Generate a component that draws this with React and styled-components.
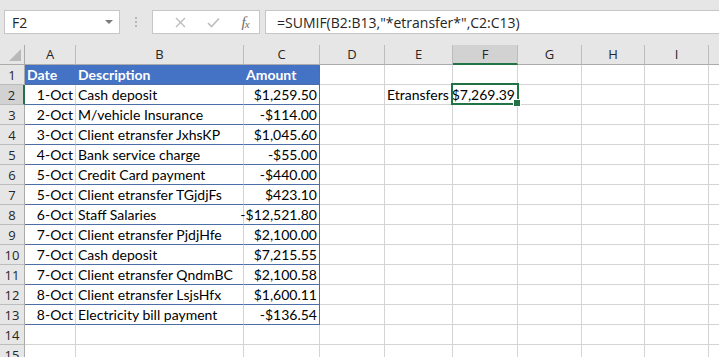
import React from "react";
import styled, { createGlobalStyle } from "styled-components";

const Global = createGlobalStyle`
  html, body { margin: 0; padding: 0; background: #ffffff; overflow: hidden; }
  body { width: 719px; height: 357px; }
  * { box-sizing: border-box; }
`;

const Page = styled.div`
  width: 719px;
  height: 357px;
  overflow: hidden;
  background: #ffffff;
  display: flex;
  flex-direction: column;
`;

const Toolbar = styled.div`
  height: 45px;
  flex: none;
  background: #e6e6e6;
  display: flex;
  align-items: flex-start;
  padding: 10px 0 0 4px;
  font-family: "Open Sans", "Noto Sans", sans-serif;
`;

const NameBox = styled.div`
  width: 116px;
  height: 24px;
  background: #ffffff;
  border: 1px solid #c6c6c6;
  display: flex;
  align-items: center;
  justify-content: space-between;
  padding: 0 6px 0 7px;
  font-size: 14px;
  color: #262626;
`;

const Caret = styled.span`
  width: 0;
  height: 0;
  border-left: 4px solid transparent;
  border-right: 4px solid transparent;
  border-top: 4px solid #7a7a7a;
`;

const Dots = styled.div`
  width: 32px;
  height: 24px;
  display: flex;
  flex-direction: column;
  align-items: center;
  justify-content: center;
  gap: 2px;
  & > span {
    width: 2px;
    height: 2px;
    background: #a6a6a6;
    border-radius: 1px;
  }
`;

const ActionBox = styled.div`
  width: 108px;
  height: 24px;
  background: #ffffff;
  border: 1px solid #c6c6c6;
  display: flex;
  align-items: center;
  padding-left: 12px;
`;

const Action = styled.span`
  width: ${(p) => p.$w}px;
  display: flex;
  align-items: center;
  justify-content: center;
  color: #bdbdbd;
`;

const Fx = styled.span`
  font-family: "Liberation Serif", "DejaVu Serif", serif;
  font-style: italic;
  font-size: 15px;
  color: #6b6b6b;
  letter-spacing: -1px;
  & > sub {
    font-size: 11px;
    vertical-align: -1px;
  }
`;

const FormulaBox = styled.div`
  flex: 1;
  height: 24px;
  margin-left: 5px;
  background: #ffffff;
  border: 1px solid #c6c6c6;
  border-right: none;
  display: flex;
  align-items: center;
  padding-left: 11px;
  font-size: 14px;
  color: #262626;
  white-space: nowrap;
`;

const Sheet = styled.div`
  display: grid;
  grid-template-columns: 25px 51px 168px 76px 65px 68px 65px 64px 63px 64px 64px;
  grid-auto-rows: 20px;
  width: 773px;
`;

const ColHead = styled.div`
  background: ${(p) => (p.$sel ? "#d2d2d2" : "#e6e6e6")};
  border-right: 1px solid #bcbcbc;
  border-bottom: ${(p) => (p.$sel ? "2px solid #217346" : "1px solid #ababab")};
  display: flex;
  align-items: center;
  justify-content: center;
  font-family: "Open Sans", "Noto Sans", sans-serif;
  font-size: 13px;
  color: #262626;
  padding-bottom: ${(p) => (p.$sel ? "0" : "1px")};
`;

const Corner = styled.div`
  background: #e6e6e6;
  border-right: 1px solid #ababab;
  border-bottom: 1px solid #ababab;
  position: relative;
  &::after {
    content: "";
    position: absolute;
    right: 3px;
    bottom: 3px;
    width: 0;
    height: 0;
    border-left: 12px solid transparent;
    border-bottom: 12px solid #b9b9b9;
  }
`;

const RowHead = styled.div`
  background: ${(p) => (p.$sel ? "#d2d2d2" : "#e6e6e6")};
  border-right: ${(p) => (p.$sel ? "2px solid #217346" : "1px solid #ababab")};
  border-bottom: 1px solid #bcbcbc;
  display: flex;
  align-items: center;
  justify-content: center;
  font-family: "Open Sans", "Noto Sans", sans-serif;
  font-size: 13px;
  color: #262626;
`;

const Cell = styled.div`
  position: relative;
  background: ${(p) => (p.$head ? "#4472c4" : "#ffffff")};
  color: ${(p) => (p.$head ? "#ffffff" : "#000000")};
  font-weight: ${(p) => (p.$head ? 700 : 400)};
  border-right: 1px solid ${(p) => (p.$edge ? "#4e6ea8" : p.$head ? "#4472c4" : "#d4d4d4")};
  border-bottom: 1px solid ${(p) => (p.$table ? "#4e6ea8" : "#d4d4d4")};
  display: flex;
  align-items: center;
  justify-content: ${(p) => (p.$right ? "flex-end" : "flex-start")};
  padding: 0 ${(p) => (p.$right ? "2px" : "0")} 0 ${(p) => (p.$right ? "0" : "2px")};
  font-family: "Lato", "Open Sans", sans-serif;
  font-size: 14px;
  white-space: nowrap;
`;

const Selection = styled.div`
  position: absolute;
  z-index: 3;
  left: -2px;
  top: -2px;
  right: -2px;
  bottom: -1px;
  border: 2px solid #217346;
  pointer-events: none;
  &::after {
    content: "";
    position: absolute;
    right: -4px;
    bottom: -4px;
    width: 6px;
    height: 6px;
    background: #217346;
    border: 1px solid #ffffff;
  }
`;

const cols = ["A", "B", "C", "D", "E", "F", "G", "H", "I", "J"];

const data = [
  ["1-Oct", "Cash deposit", "$1,259.50"],
  ["2-Oct", "M/vehicle Insurance", "-$114.00"],
  ["3-Oct", "Client etransfer JxhsKP", "$1,045.60"],
  ["4-Oct", "Bank service charge", "-$55.00"],
  ["5-Oct", "Credit Card payment", "-$440.00"],
  ["5-Oct", "Client etransfer TGjdjFs", "$423.10"],
  ["6-Oct", "Staff Salaries", "-$12,521.80"],
  ["7-Oct", "Client etransfer PjdjHfe", "$2,100.00"],
  ["7-Oct", "Cash deposit", "$7,215.55"],
  ["7-Oct", "Client etransfer QndmBC", "$2,100.58"],
  ["8-Oct", "Client etransfer LsjsHfx", "$1,600.11"],
  ["8-Oct", "Electricity bill payment", "-$136.54"],
];

function Row({ n }) {
  const isHead = n === 1;
  const rec = n >= 2 && n <= 13 ? data[n - 2] : null;
  const inTable = n <= 13;
  return (
    <>
      <RowHead $sel={n === 2}>{n}</RowHead>
      <Cell $head={isHead} $table={inTable} $right={!isHead}>
        {isHead ? "Date" : rec ? rec[0] : ""}
      </Cell>
      <Cell $head={isHead} $table={inTable}>
        {isHead ? "Description" : rec ? rec[1] : ""}
      </Cell>
      <Cell $head={isHead} $table={inTable} $edge={inTable} $right={!isHead}>
        {isHead ? "Amount" : rec ? rec[2] : ""}
      </Cell>
      <Cell />
      <Cell>{n === 2 ? "Etransfers" : ""}</Cell>
      <Cell $right>
        {n === 2 ? "$7,269.39" : ""}
        {n === 2 && <Selection />}
      </Cell>
      <Cell />
      <Cell />
      <Cell />
      <Cell />
    </>
  );
}

export default function App() {
  const rows = Array.from({ length: 15 }, (_, i) => i + 1);
  return (
    <Page>
      <Global />
      <Toolbar>
        <NameBox>
          F2
          <Caret />
        </NameBox>
        <Dots>
          <span />
          <span />
          <span />
        </Dots>
        <ActionBox>
          <Action $w={30}>
            <svg width="11" height="11" viewBox="0 0 11 11">
              <path d="M1 1 L10 10 M10 1 L1 10" stroke="#bdbdbd" strokeWidth="1.4" fill="none" />
            </svg>
          </Action>
          <Action $w={36}>
            <svg width="13" height="11" viewBox="0 0 13 11">
              <path d="M1 6 L4.5 9.5 L12 1.5" stroke="#bdbdbd" strokeWidth="1.6" fill="none" />
            </svg>
          </Action>
          <Action $w={28}>
            <Fx>
              f<sub>x</sub>
            </Fx>
          </Action>
        </ActionBox>
        <FormulaBox>=SUMIF(B2:B13,"*etransfer*",C2:C13)</FormulaBox>
      </Toolbar>
      <Sheet>
        <Corner />
        {cols.map((c) => (
          <ColHead key={c} $sel={c === "F"}>
            {c}
          </ColHead>
        ))}
        {rows.map((n) => (
          <Row key={n} n={n} />
        ))}
      </Sheet>
    </Page>
  );
}
